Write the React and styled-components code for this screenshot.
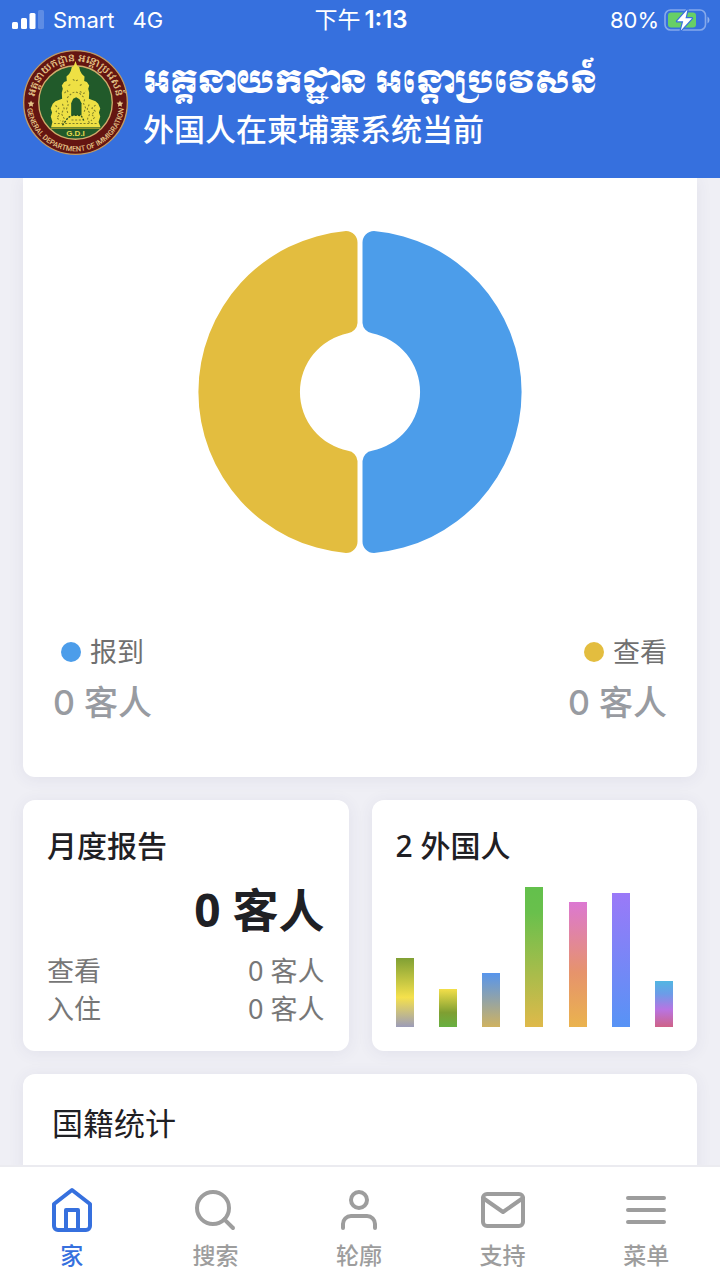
import React from "react";
import styled, { createGlobalStyle } from "styled-components";

const GlobalStyle = createGlobalStyle`
  *, *::before, *::after { box-sizing: border-box; }
  body {
    margin: 0;
    background: #efeff5;
    color: #1f2024;
    font-family: "Noto Sans", "Noto Sans CJK SC", sans-serif;
  }
`;

const Screen = styled.div`
  display: flex;
  flex-direction: column;
  height: 100vh;
  overflow: hidden;
`;

const Header = styled.header`
  position: relative;
  z-index: 1;
  flex: none;
  background: #3670de;
  color: #fff;
`;

const StatusBar = styled.div`
  display: grid;
  grid-template-columns: 1fr auto 1fr;
  align-items: center;
  height: 40px;
  padding: 0 10px 0 12px;
  font: 400 22px/40px Inter, "Noto Sans CJK SC", sans-serif;
`;

const StatusGroup = styled.div`
  display: flex;
  align-items: center;
  justify-content: ${(p) => (p.$end ? "flex-end" : "flex-start")};
  gap: ${(p) => (p.$end ? 5 : 9)}px;
`;

const Network = styled.span`
  margin-left: 9px;
`;

const Clock = styled.time`
  display: flex;
  gap: 4px;
  font-size: 24px;
  font-weight: 600;
`;

const ClockPeriod = styled.span`
  font-size: 23px;
  font-weight: 400;
`;

const Brand = styled.div`
  display: flex;
  gap: 15px;
  padding: 10px 23px 23px;
`;

const BrandText = styled.div`
  padding-top: 10px;
`;

const KhmerTitle = styled.h1`
  margin: 0;
  height: 46px;
  font: 400 31px/46px "Khmer OS Muol Light", Moul, "Noto Serif Khmer", "Noto Sans Khmer", "Noto Sans", sans-serif;
  white-space: nowrap;
`;

const Subtitle = styled.p`
  margin: 0;
  font: 500 31px/44px "Noto Sans CJK SC", sans-serif;
`;

const Main = styled.main`
  flex: 1;
  min-height: 0;
  display: flex;
  flex-direction: column;
  gap: 23px;
  padding: 0 23px;
  overflow: hidden;
`;

const Card = styled.section`
  flex: ${(p) => (p.$grow ? "1 0 auto" : "none")};
  background: #fff;
  border-radius: ${(p) => (p.$shape === "bottom" ? "0 0 12px 12px" : p.$shape === "top" ? "12px 12px 0 0" : "12px")};
  box-shadow: 0 2px 16px rgba(60, 60, 110, 0.08);
`;

const ChartCard = styled(Card)`
  display: flex;
  flex-direction: column;
  align-items: stretch;
  padding: 52px 30px 45px;
`;

const Donut = styled.svg`
  display: block;
  align-self: center;
  width: 324px;
  height: 324px;
`;

const Legend = styled.dl`
  display: flex;
  justify-content: space-between;
  margin: 76px 0 0;
`;

const LegendItem = styled.div`
  display: flex;
  flex-direction: column;
`;

const LegendLabel = styled.dt`
  display: flex;
  align-items: center;
  align-self: ${(p) => (p.$end ? "flex-end" : "flex-start")};
  gap: 9px;
  padding-left: 8px;
  color: #707070;
  font-size: 27px;
  line-height: 44px;

  &::before {
    content: "";
    width: 20px;
    height: 20px;
    border-radius: 50%;
    background: ${(p) => p.$color};
  }
`;

const LegendValue = styled.dd`
  margin: 0;
  color: #989ba1;
  font: 500 34px/58px Inter, "Noto Sans CJK SC", sans-serif;
`;

const CardRow = styled.div`
  flex: none;
  display: grid;
  grid-template-columns: 1fr 1fr;
  gap: 23px;
`;

const StatCard = styled(Card)`
  display: flex;
  flex-direction: column;
  height: 251px;
  padding: 23px 24px 24px;
`;

const CardTitle = styled.h2`
  margin: 0;
  font-size: 30px;
  line-height: 46px;
  font-weight: 500;
`;

const Total = styled.p`
  margin: 0;
  text-align: right;
  font-size: 46px;
  line-height: 80px;
  font-weight: 700;
`;

const Rows = styled.dl`
  margin: 3px 0 0;
  color: #777;
  font-size: 27px;
  line-height: 38px;
`;

const Row = styled.div`
  display: flex;
  justify-content: space-between;
`;

const RowValue = styled.dd`
  margin: 0;
  font-weight: 400;
`;

const Bars = styled.div`
  flex: 1;
  display: flex;
  align-items: flex-end;
  justify-content: space-between;
`;

const Bar = styled.div`
  width: 18px;
  background: ${(p) => p.$fill};
`;

const NationCard = styled(Card)`
  padding: 25px 29px;
`;

const NationTitle = styled.h2`
  margin: 0;
  font-size: 31px;
  line-height: 48px;
  font-weight: 400;
`;

const TabBar = styled.nav`
  position: relative;
  flex: none;
  display: flex;
  height: 115px;
  padding: 19px 2px 0 0;
  background: #fff;
  border-top: 2px solid #ebebf0;
`;

const Tab = styled.a`
  flex: 1;
  display: flex;
  flex-direction: column;
  align-items: center;
  color: ${(p) => (p.$active ? "#3670de" : "#9d9d9d")};
  font-size: 23px;
  line-height: 42px;
  font-weight: 500;
  text-decoration: none;
`;

const TabIcon = styled.svg`
  width: 48px;
  height: 48px;
  fill: none;
  stroke: currentColor;
  stroke-width: 2;
  stroke-linecap: round;
  stroke-linejoin: round;
`;

const EmblemSvg = styled.svg`
  flex: none;
  width: 105px;
  height: 105px;
`;

const Signal = () => (
  <svg width="32" height="20" viewBox="0 0 32 20" fill="#fff" aria-hidden="true">
    <rect x="0" y="12" width="6" height="7" rx="1.5" />
    <rect x="9" y="8" width="6" height="11" rx="1.5" />
    <rect x="17.500" y="3" width="6" height="16" rx="1.5" />
    <rect x="26" y="0" width="6" height="19" rx="1.5" opacity="0.2" />
  </svg>
);

const Battery = () => (
  <svg width="46" height="24" viewBox="0 0 46 24" aria-hidden="true">
    <rect x="1" y="2" width="40.500" height="20" rx="5.500" fill="none" stroke="#fff" strokeOpacity="0.4" strokeWidth="1.600" />
    <path d="M43.500 8.500q2 1 2 3.500t-2 3.500z" fill="#fff" opacity="0.45" />
    <rect x="4" y="4.500" width="28" height="15" rx="3" fill="#67cf66" />
    <path d="M23.500 1.500 13 13.300h6.200L16.800 22.500 28 10.300h-6.500z" fill="#fff" stroke="#3670de" strokeWidth="2.400" paintOrder="stroke" strokeLinejoin="round" />
  </svg>
);

const Emblem = () => (
  <EmblemSvg viewBox="8 15 314 314" role="img" aria-label="General Department of Immigration">
    <defs>
      <path id="ring-top" d="M42 172a123 123 0 0 1 246 0" />
      <path id="ring-bottom" d="M19 172a146 146 0 0 0 292 0" />
    </defs>
    <circle cx="165" cy="172" r="155" fill="#641511" stroke="#c39b62" strokeWidth="4" />
    <circle cx="165" cy="172" r="110" fill="#215a2a" stroke="#d0ad6c" strokeWidth="4" />
    <g fill="#e3c286" textAnchor="middle">
      <text fontSize="30" fontWeight="600" fontFamily="Noto Serif Khmer, Noto Sans Khmer, Noto Sans, sans-serif">
        <textPath href="#ring-top" startOffset="50%">អគ្គនាយកដ្ឋាន អន្តោប្រវេសន៍</textPath>
      </text>
      <text fontSize="22" fontWeight="500" fontFamily="Liberation Sans Narrow, Roboto, sans-serif">
        <textPath href="#ring-bottom" startOffset="50%">GENERAL DEPARTMENT OF IMMIGRATION</textPath>
      </text>
    </g>
    <path d="M32 166l3 6 7 1-5 5 1 7-6-3-6 3 1-7-5-5 7-1z" fill="#e3c286" />
    <path d="M298 166l3 6 7 1-5 5 1 7-6-3-6 3 1-7-5-5 7-1z" fill="#e3c286" />
    <path
      d="M92 246l4-16-5-16 4-12-4-12 6-14 8-8 12-4 8-3-1-18 3-12-3-10 7-10 8-3-1-14 8-7 5-9 3-12 6-4 5-14 5 14 6 4 3 12 5 9 8 7-1 14 8 3 7 10-3 10 3 12-1 18 8 3 12 4 8 8 6 14-4 12 4 12-5 16 6 16z"
      fill="#eee044"
    />
    <path d="M152 211v-37l6-13 9-5 10 6 6 12v36z" fill="#215a2a" />
    <path d="M126 240l17-23 14-7 25 1 9 17" fill="none" stroke="#244d21" strokeWidth="4" strokeDasharray="6 4" />
    <g fill="none" stroke="#7d7d28" strokeWidth="3" strokeDasharray="6 5">
      <path d="M105 181l10 8-8 10 11 8-9 11 11 9M225 180l-11 9 10 9-11 9 9 10-11 10" />
      <path d="M126 176l5 14-8 15 8 15-7 16M206 178l-6 13 8 14-7 16 7 15" />
      <path d="M132 144l8-8 6 9M178 139l12 6 6-7M144 121l9-4M178 121l10-5M157 103l8 5 8-4M140 158l14-14 10-4 14 5 14 14" />
      <path d="M140 166l3 13-5 13 5 15M192 163l-3 12 6 13-6 17M101 235h128M153 224h34" />
    </g>
    <path d="M90 249h148" stroke="#b9ac32" strokeWidth="3" />
    <text x="165" y="272" fontSize="24" fontWeight="700" fontFamily="Liberation Sans, sans-serif" fill="#e4d84a" textAnchor="middle">G.D.I</text>
  </EmblemSvg>
);

const donutHalf =
  "M2.500-149A11.500 11.500 0 0 1 14-160.900A161.500 161.500 0 0 1 14 160.900A11.500 11.500 0 0 1 2.500 149V69A11 11 0 0 1 12 58.800A60 60 0 0 0 12-58.800A11 11 0 0 1 2.500-69Z";

const bars = [
  { height: 69, fill: "linear-gradient(#80a034, #f5e14c 57%, #9c9cb8)" },
  { height: 38, fill: "linear-gradient(#f3df4a, #7f9f32 62%, #68b042)" },
  { height: 54, fill: "linear-gradient(#5795ec, #cfb260)" },
  { height: 140, fill: "linear-gradient(#63c04c, #69c04c 18%, #dfb94a)" },
  { height: 125, fill: "linear-gradient(#dc78d2, #e6936c 56%, #eab34e)" },
  { height: 134, fill: "linear-gradient(#9a79f8, #5793f5)" },
  { height: 46, fill: "linear-gradient(#52b6e2, #6c9ce8 28%, #b874e2 62%, #cf6287)" },
];

const tabs = [
  {
    label: "家",
    active: true,
    icon: (
      <>
        <path d="M3 9l9-7 9 7v11a2 2 0 0 1-2 2H5a2 2 0 0 1-2-2z" />
        <path d="M9 22V12h6v10" />
      </>
    ),
  },
  {
    label: "搜索",
    icon: (
      <>
        <circle cx="11" cy="11" r="8" />
        <path d="M21 21l-4.350-4.350" />
      </>
    ),
  },
  {
    label: "轮廓",
    icon: (
      <>
        <path d="M20 21v-2a4 4 0 0 0-4-4H8a4 4 0 0 0-4 4v2" />
        <circle cx="12" cy="7" r="4" />
      </>
    ),
  },
  {
    label: "支持",
    icon: (
      <>
        <rect x="2" y="4" width="20" height="16" rx="2" />
        <path d="M22 6l-10 7L2 6" />
      </>
    ),
  },
  { label: "菜单", icon: <path d="M3 6h18M3 12h18M3 18h18" /> },
];

export default function App() {
  return (
    <Screen lang="zh-CN">
      <GlobalStyle />
      <Header>
        <StatusBar>
          <StatusGroup>
            <Signal />
            <span>Smart</span>
            <Network>4G</Network>
          </StatusGroup>
          <Clock>
            <ClockPeriod>下午</ClockPeriod>
            <span>1:13</span>
          </Clock>
          <StatusGroup $end>
            <span>80%</span>
            <Battery />
          </StatusGroup>
        </StatusBar>
        <Brand>
          <Emblem />
          <BrandText>
            <KhmerTitle lang="km">អគ្គនាយកដ្ឋាន អន្តោប្រវេសន៍</KhmerTitle>
            <Subtitle>外国人在柬埔寨系统当前</Subtitle>
          </BrandText>
        </Brand>
      </Header>

      <Main>
        <ChartCard $shape="bottom">
          <Donut viewBox="-162 -162 324 324" aria-hidden="true">
            <path d={donutHalf} fill="#4c9dea" />
            <path d={donutHalf} fill="#e3bd3f" transform="scale(-1 1)" />
          </Donut>
          <Legend>
            <LegendItem>
              <LegendLabel $color="#4c9dea">报到</LegendLabel>
              <LegendValue>0 客人</LegendValue>
            </LegendItem>
            <LegendItem>
              <LegendLabel $color="#e3bd3f" $end>查看</LegendLabel>
              <LegendValue>0 客人</LegendValue>
            </LegendItem>
          </Legend>
        </ChartCard>

        <CardRow>
          <StatCard>
            <CardTitle>月度报告</CardTitle>
            <Total>0 客人</Total>
            <Rows>
              <Row>
                <dt>查看</dt>
                <RowValue>0 客人</RowValue>
              </Row>
              <Row>
                <dt>入住</dt>
                <RowValue>0 客人</RowValue>
              </Row>
            </Rows>
          </StatCard>
          <StatCard>
            <CardTitle>2 外国人</CardTitle>
            <Bars>
              {bars.map((bar) => (
                <Bar key={bar.height} $fill={bar.fill} style={{ height: bar.height }} />
              ))}
            </Bars>
          </StatCard>
        </CardRow>

        <NationCard $shape="top" $grow>
          <NationTitle>国籍统计</NationTitle>
        </NationCard>
      </Main>

      <TabBar>
        {tabs.map((tab) => (
          <Tab key={tab.label} href="#" $active={tab.active}>
            <TabIcon viewBox="0 0 24 24" aria-hidden="true">{tab.icon}</TabIcon>
            {tab.label}
          </Tab>
        ))}
      </TabBar>
    </Screen>
  );
}
